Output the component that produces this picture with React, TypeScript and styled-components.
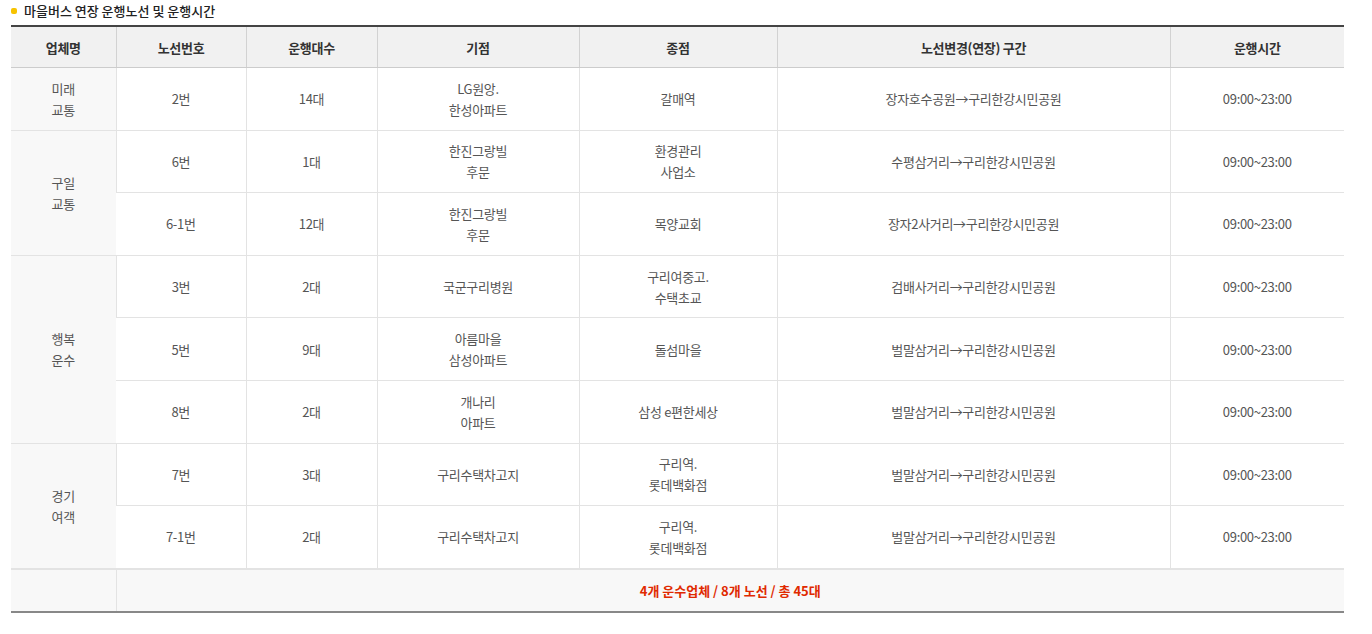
import React from "react";
import styled, { createGlobalStyle } from "styled-components";

const GlobalStyle = createGlobalStyle`
	body {
		margin: 0;
		background: #fff;
		font-family: "Noto Sans CJK KR", "Noto Sans", sans-serif;
	}
`;

const Wrap = styled.div`
	padding: 3px 28px 0 11px;
`;

const Title = styled.h3`
	display: flex;
	align-items: center;
	gap: 7px;
	margin: 0 0 6px;
	font-size: 13px;
	font-weight: 500;
	line-height: 16px;
	color: #222;
	&::before {
		content: "";
		width: 6px;
		height: 6px;
		border-radius: 2px;
		background: #f7c300;
	}
`;

const Table = styled.table`
	width: 100%;
	border-collapse: collapse;
	table-layout: fixed;
	border-top: 2px solid #444;
	border-bottom: 2px solid #888;
	font-size: 13px;
	color: #555;
	text-align: center;
	letter-spacing: -0.3px;
`;

const Th = styled.th`
	height: 40px;
	padding: 0;
	background: #f1f1f1;
	border-left: 1px solid #d2d2d2;
	border-bottom: 1px solid #ccc;
	font-weight: 700;
	color: #333;
	&:first-child {
		border-left: 0;
	}
`;

const Td = styled.td<{ $company?: boolean }>`
	height: 61.6px;
	padding: 0 6px;
	line-height: 21px;
	border-left: 1px solid #e3e3e3;
	border-bottom: 1px solid #e3e3e3;
	background: ${(p) => (p.$company ? "#f8f8f8" : "#fff")};
	&:first-child {
		border-left: 0;
	}
`;

const FootCell = styled.td<{ $blank?: boolean }>`
	height: 41px;
	padding: 0;
	border-top: 2px solid #e3e3e3;
	border-left: ${(p) => (p.$blank ? "0" : "1px solid #e3e3e3")};
	background: #f8f8f8;
	color: #e02a00;
	font-weight: 700;
	letter-spacing: 0;
`;

type Route = {
	no: string;
	count: string;
	start: string[];
	end: string[];
	change: string;
};

type Company = {
	name: string[];
	routes: Route[];
};

const data: Company[] = [
	{
		name: ["미래", "교통"],
		routes: [{ no: "2번", count: "14대", start: ["LG원앙.", "한성아파트"], end: ["갈매역"], change: "장자호수공원→구리한강시민공원" }],
	},
	{
		name: ["구일", "교통"],
		routes: [
			{ no: "6번", count: "1대", start: ["한진그랑빌", "후문"], end: ["환경관리", "사업소"], change: "수평삼거리→구리한강시민공원" },
			{ no: "6-1번", count: "12대", start: ["한진그랑빌", "후문"], end: ["목양교회"], change: "장자2사거리→구리한강시민공원" },
		],
	},
	{
		name: ["행복", "운수"],
		routes: [
			{ no: "3번", count: "2대", start: ["국군구리병원"], end: ["구리여중고.", "수택초교"], change: "검배사거리→구리한강시민공원" },
			{ no: "5번", count: "9대", start: ["아름마을", "삼성아파트"], end: ["돌섬마을"], change: "벌말삼거리→구리한강시민공원" },
			{ no: "8번", count: "2대", start: ["개나리", "아파트"], end: ["삼성 e편한세상"], change: "벌말삼거리→구리한강시민공원" },
		],
	},
	{
		name: ["경기", "여객"],
		routes: [
			{ no: "7번", count: "3대", start: ["구리수택차고지"], end: ["구리역.", "롯데백화점"], change: "벌말삼거리→구리한강시민공원" },
			{ no: "7-1번", count: "2대", start: ["구리수택차고지"], end: ["구리역.", "롯데백화점"], change: "벌말삼거리→구리한강시민공원" },
		],
	},
];

const widths = [105, 130, 131, 202, 198, 393, 174];
const heads = ["업체명", "노선번호", "운행대수", "기점", "종점", "노선변경(연장) 구간", "운행시간"];

function Lines({ items }: { items: string[] }) {
	return (
		<>
			{items.map((t, i) => (
				<React.Fragment key={i}>
					{i > 0 && <br />}
					{t}
				</React.Fragment>
			))}
		</>
	);
}

export default function App() {
	return (
		<Wrap>
			<GlobalStyle />
			<Title>마을버스 연장 운행노선 및 운행시간</Title>
			<Table>
				<colgroup>
					{widths.map((w, i) => (
						<col key={i} style={{ width: w }} />
					))}
				</colgroup>
				<thead>
					<tr>
						{heads.map((h) => (
							<Th key={h}>{h}</Th>
						))}
					</tr>
				</thead>
				<tbody>
					{data.map((c) =>
						c.routes.map((r, i) => (
							<tr key={c.name.join("") + r.no}>
								{i === 0 && (
									<Td $company rowSpan={c.routes.length}>
										<Lines items={c.name} />
									</Td>
								)}
								<Td>{r.no}</Td>
								<Td>{r.count}</Td>
								<Td>
									<Lines items={r.start} />
								</Td>
								<Td>
									<Lines items={r.end} />
								</Td>
								<Td>{r.change}</Td>
								<Td>09:00~23:00</Td>
							</tr>
						))
					)}
				</tbody>
				<tfoot>
					<tr>
						<FootCell $blank />
						<FootCell colSpan={6}>4개 운수업체 / 8개 노선 / 총 45대</FootCell>
					</tr>
				</tfoot>
			</Table>
		</Wrap>
	);
}
